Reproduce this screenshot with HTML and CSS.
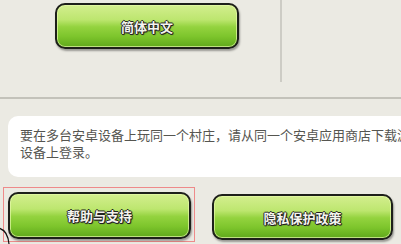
FILE: index.html
```html
<!DOCTYPE html>
<html lang="zh">
<head>
<meta charset="utf-8">
<link rel="stylesheet" href="styles.css">
</head>
<body>
<div class="page">
  <div class="top">
    <div class="btn btn-top"><span class="label">简体中文</span></div>
    <div class="vline"></div>
  </div>
  <div class="hline"></div>
  <div class="panel">
    <p class="msg">要在多台安卓设备上玩同一个村庄，请从同一个安卓应用商店下载游戏，并使用同一个账号在所有<br>设备上登录。</p>
  </div>
  <div class="row">
    <div class="focus">
      <div class="btn btn-help"><span class="label">帮助与支持</span></div>
    </div>
    <div class="btn btn-privacy"><span class="label">隐私保护政策</span></div>
  </div>
  <svg class="arc" width="14" height="18" viewBox="0 0 14 18"><path d="M-2 2 C4 3 8 8 9 18" fill="none" stroke="#111" stroke-width="1.2"/></svg>
</div>
</body>
</html>
```
FILE: styles.css
```css
html, body {
  margin: 0;
  padding: 0;
}
body {
  width: 401px;
  height: 244px;
  overflow: hidden;
  background: #ebeae3;
  font-family: "Noto Sans CJK SC", "Noto Sans", sans-serif;
}
.page {
  position: relative;
  width: 401px;
  height: 244px;
  overflow: hidden;
}
.top {
  display: flex;
  height: 97px;
}
.btn {
  box-sizing: border-box;
  border: 2px solid #1d1f1a;
  border-radius: 10px;
  background: linear-gradient(#d3ee8e 0%, #bde66f 35%, #94d33f 52%, #7dc52c 75%, #5fa81b 100%);
  box-shadow: inset 0 0 0 1px rgba(230, 250, 170, 0.7), 1px 2px 2px rgba(0, 0, 0, 0.35);
  display: flex;
  align-items: center;
  justify-content: center;
}
.label {
  color: #f4f4ee;
  font-size: 13px;
  font-weight: bold;
  text-shadow: 1px 0 0 #222, -1px 0 0 #222, 0 1px 0 #222, 0 -1px 0 #222, 1px 1px 1px #222;
}
.btn-top {
  margin: 3px 0 0 55px;
  width: 184px;
  height: 46px;
}
.vline {
  margin-left: 41px;
  width: 2px;
  height: 82px;
  background: #cdccc5;
}
.hline {
  height: 2px;
  background: #c3c2ba;
}
.panel {
  margin: 17px 0 0 8px;
  width: 440px;
  height: 61px;
  background: #ffffff;
  border-radius: 10px;
  box-sizing: border-box;
  padding: 10px 0 0 12px;
}
.msg {
  margin: 0;
  white-space: nowrap;
  font-size: 13px;
  line-height: 17px;
  color: #555550;
}
.row {
  display: flex;
  margin-top: 10px;
}
.focus {
  margin-left: 3px;
  width: 192px;
  height: 55px;
  box-sizing: border-box;
  border: 1px solid #ee8a8a;
  padding: 4px 0 0 4px;
}
.btn-help {
  width: 183px;
  height: 47px;
}
.btn-privacy {
  margin: 7px 0 0 17px;
  width: 181px;
  height: 46px;
}
.arc {
  position: absolute;
  left: 0;
  top: 226px;
}
```
